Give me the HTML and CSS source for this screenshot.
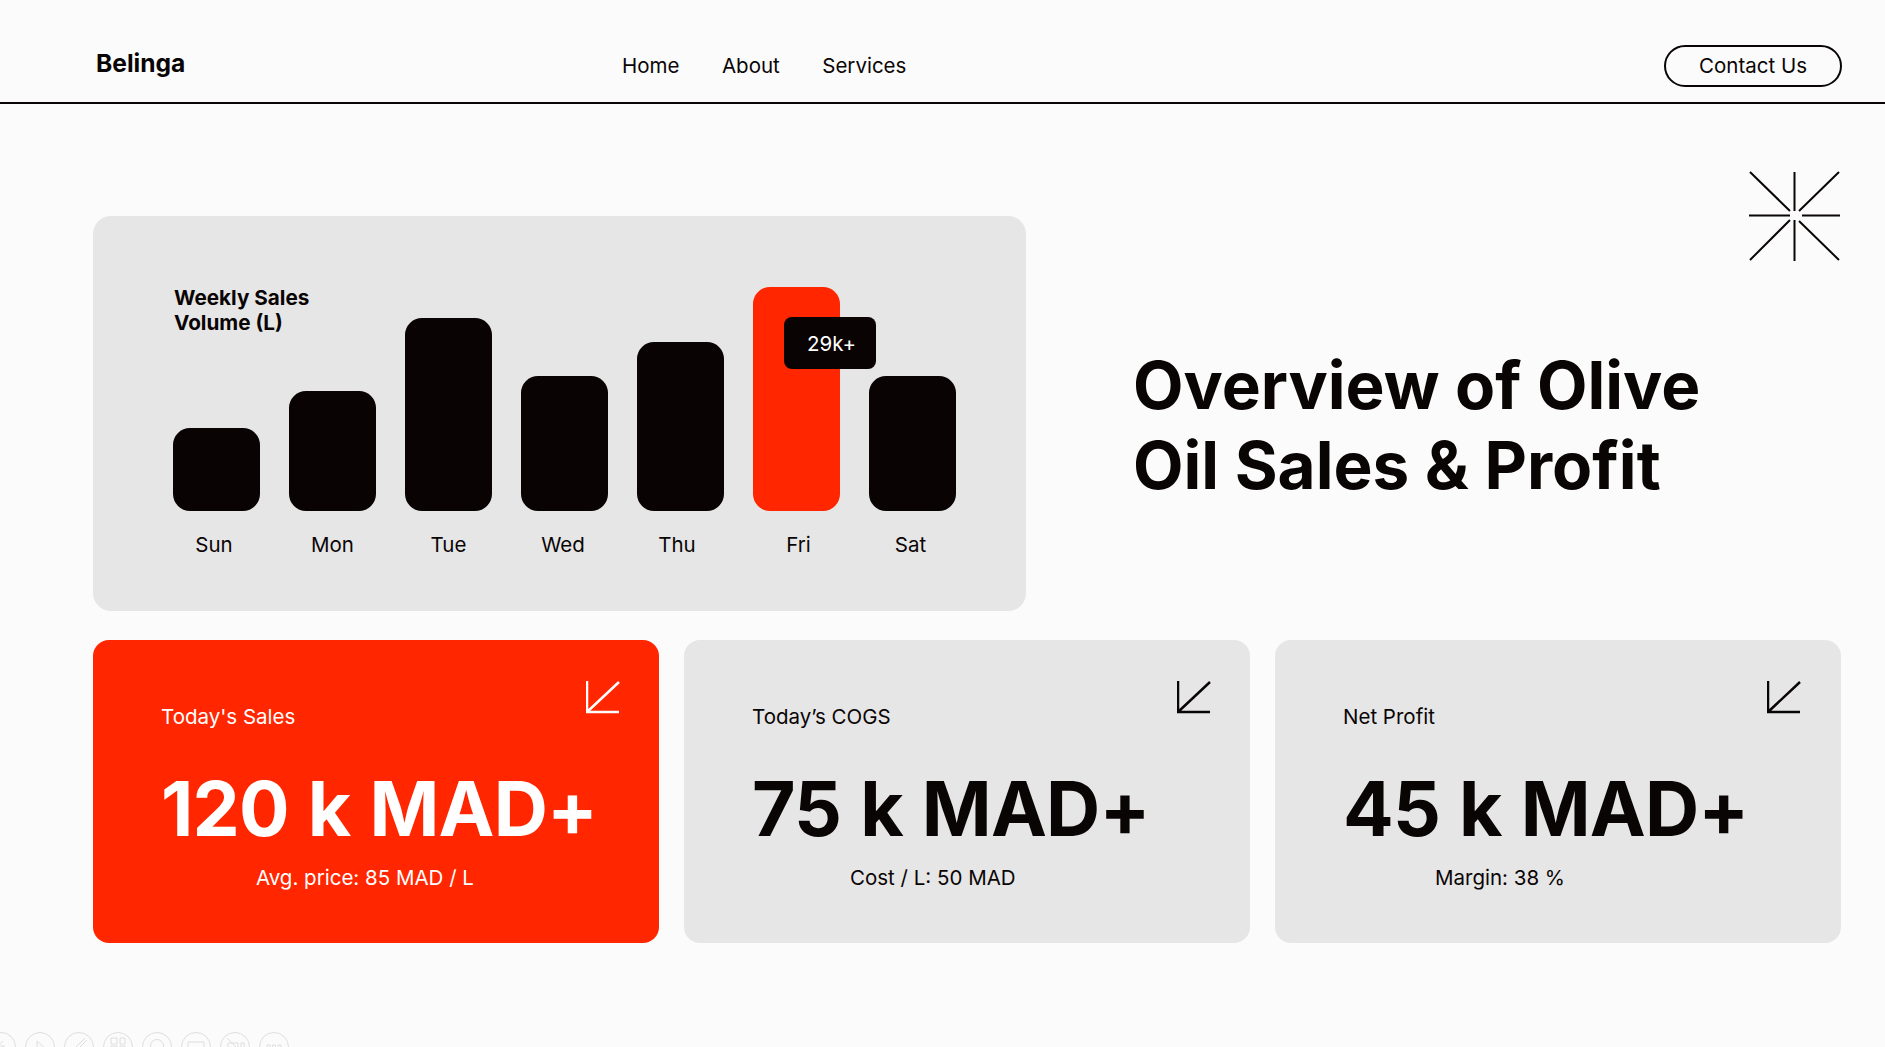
FILE: index.html
```html
<!DOCTYPE html>
<html lang="en">
<head>
    <meta charset="UTF-8">
    <meta name="viewport" content="width=device-width, initial-scale=1.0">
    <title>Belinga - Olive Oil Sales</title>
    <link rel="stylesheet" href="styles.css">
</head>
<body>
    <header class="site-header">
        <div class="logo">Belinga</div>
        <nav class="nav">
            <a href="#">Home</a>
            <a href="#">About</a>
            <a href="#">Services</a>
        </nav>
        <a class="contact-btn" href="#">Contact Us</a>
    </header>

    <main class="content">
        <section class="hero">
            <div class="chart-card">
                <h2 class="chart-title">Weekly Sales<br>Volume (L)</h2>
                <div class="bars">
                    <div class="bar" style="height:83px"></div>
                    <div class="bar" style="height:120px"></div>
                    <div class="bar" style="height:193px"></div>
                    <div class="bar" style="height:135px"></div>
                    <div class="bar" style="height:169px"></div>
                    <div class="bar bar-active" style="height:224px">
                        <div class="tooltip">29k+</div>
                    </div>
                    <div class="bar" style="height:135px"></div>
                </div>
                <div class="days">
                    <span>Sun</span>
                    <span>Mon</span>
                    <span>Tue</span>
                    <span>Wed</span>
                    <span>Thu</span>
                    <span>Fri</span>
                    <span>Sat</span>
                </div>
            </div>
            <div class="hero-side">
                <svg class="star" width="91" height="90" viewBox="0 0 91 90" fill="none" stroke="#0a0505" stroke-width="2">
                    <path d="M0 44.5H41M53 44.5H91M45.5 1V40M45.5 49V90M1 1L41 40M90 1L50 40M41 49L1 89M50 50L90 89"/>
                </svg>
                <h1 class="hero-title">Overview of Olive<br>Oil Sales &amp; Profit</h1>
            </div>
        </section>

        <section class="stats">
            <div class="stat stat-red">
                <div class="stat-head">
                    <span class="stat-label">Today's Sales</span>
                    <svg class="arrow" width="34" height="33" viewBox="0 0 34 33" fill="none" stroke="currentColor" stroke-width="2.5"><path d="M1 0V31H33M1 31L33 1"/></svg>
                </div>
                <div class="stat-value">120 k MAD+</div>
                <div class="stat-note">Avg. price: 85 MAD / L</div>
            </div>
            <div class="stat">
                <div class="stat-head">
                    <span class="stat-label">Today’s COGS</span>
                    <svg class="arrow" width="34" height="33" viewBox="0 0 34 33" fill="none" stroke="currentColor" stroke-width="2.5"><path d="M1 0V31H33M1 31L33 1"/></svg>
                </div>
                <div class="stat-value">75 k MAD+</div>
                <div class="stat-note">Cost / L: 50 MAD</div>
            </div>
            <div class="stat">
                <div class="stat-head">
                    <span class="stat-label">Net Profit</span>
                    <svg class="arrow" width="34" height="33" viewBox="0 0 34 33" fill="none" stroke="currentColor" stroke-width="2.5"><path d="M1 0V31H33M1 31L33 1"/></svg>
                </div>
                <div class="stat-value">45 k MAD+</div>
                <div class="stat-note">Margin: 38 %</div>
            </div>
        </section>
    </main>

    <!-- player controls, cut off by the bottom of the window -->
    <div class="player">
        <svg class="player-btn" viewBox="0 0 30 30"><circle cx="15" cy="15" r="14.5"/><path d="M17 9L12 14H19"/></svg>
        <svg class="player-btn" viewBox="0 0 30 30"><circle cx="15" cy="15" r="14.5"/><path d="M12 9L21 17H12Z"/></svg>
        <svg class="player-btn" viewBox="0 0 30 30"><circle cx="15" cy="15" r="14.5"/><path d="M21 6L10 17L8 22M23 8L12 19"/></svg>
        <svg class="player-btn" viewBox="0 0 30 30"><circle cx="15" cy="15" r="14.5"/><path d="M8 6H14V12H8ZM17 6H22V12H17ZM8 14H14V20H8ZM17 14H22V20H17Z"/></svg>
        <svg class="player-btn" viewBox="0 0 30 30"><circle cx="15" cy="15" r="14.5"/><circle cx="15" cy="14" r="6.5"/></svg>
        <svg class="player-btn" viewBox="0 0 30 30"><circle cx="15" cy="15" r="14.5"/><path d="M7 10H23V22H7Z"/></svg>
        <svg class="player-btn" viewBox="0 0 30 30"><circle cx="15" cy="15" r="14.5"/><path d="M7 6L23 22M8 11H18V22H8ZM21 11H24V22H21Z"/></svg>
        <svg class="player-btn" viewBox="0 0 30 30"><circle cx="15" cy="15" r="14.5"/><path d="M8 13H11V16H8ZM13.500 13H16.500V16H13.500ZM19 13H22V16H19Z"/></svg>
    </div>
</body>
</html>
```

FILE: styles.css
```css
html, body {
    height: 100%;
    overflow: hidden;
}
body {
    font-family: Inter, "Liberation Sans", sans-serif;
    margin: 0;
    background-color: #fbfbfb;
    color: #0a0505;
    font-size: 20.5px;
    line-height: 24px;
}

/* header */
.site-header {
    display: flex;
    align-items: center;
    height: 42px;
    padding: 45px 43px 15px 96px;
    border-bottom: 2px solid #0a0505;
}
.logo {
    width: 526px;
    font-size: 24.6px;
    font-weight: 700;
    margin-bottom: 6px;
}
.nav {
    display: flex;
    gap: 42.5px;
}
.nav a {
    color: #0a0505;
    text-decoration: none;
}
.contact-btn {
    margin-left: auto;
    box-sizing: border-box;
    width: 178px;
    height: 42px;
    line-height: 38px;
    text-align: center;
    color: #0a0505;
    text-decoration: none;
    border: 2px solid #0a0505;
    border-radius: 21px;
}

.content {
    padding: 67px 44px 0 93px;
}

/* hero */
.hero {
    display: flex;
    align-items: flex-start;
}
.chart-card {
    position: relative;
    box-sizing: border-box;
    width: 933px;
    height: 395px;
    margin-top: 45px;
    padding: 71px 0 0 80px;
    background: #e6e6e6;
    border-radius: 18px;
}
.chart-title {
    position: absolute;
    left: 81px;
    top: 70px;
    margin: 0;
    font-size: 20.7px;
    line-height: 24.5px;
    font-weight: 700;
}
.bars, .days {
    display: grid;
    grid-template-columns: repeat(7, 87px);
    column-gap: 29px;
}
.bars {
    height: 224px;
    align-items: end;
}
.bar {
    position: relative;
    background: #0a0303;
    border-radius: 17px;
}
.bar-active {
    background: #ff2600;
}
.tooltip {
    position: absolute;
    left: 31px;
    top: 30px;
    box-sizing: border-box;
    width: 92px;
    height: 52px;
    padding-left: 3px;
    line-height: 54px;
    text-align: center;
    color: #fff;
    background: #0a0303;
    border-radius: 8px;
}
.days {
    margin-top: 22px;
    text-align: center;
}
/* the labels don't sit quite centred under their bars */
.days span:nth-child(1) { padding-right: 5px; }
.days span:nth-child(4) { padding-right: 3px; }
.days span:nth-child(5) { padding-right: 7px; }
.days span:nth-child(6) { padding-left: 4px; }
.days span:nth-child(7) { padding-right: 4px; }
.hero-side {
    flex: 1;
    display: flex;
    flex-direction: column;
    padding-left: 107px;
}
.star {
    align-self: flex-end;
    margin-right: 1px;
}
.hero-title {
    margin: 85px 0 0;
    font-size: 65.6px;
    line-height: 79.5px;
    font-weight: 700;
}

/* stat cards */
.stats {
    display: grid;
    grid-template-columns: repeat(3, 1fr);
    gap: 25px;
    margin-top: 29px;
}
.stat {
    box-sizing: border-box;
    height: 303px;
    padding: 41px 39px 0 68px;
    background: #e6e6e6;
    border-radius: 16px;
}
.stat-red {
    background: #ff2600;
    color: #fff;
}
.stat-head {
    display: flex;
    justify-content: space-between;
    align-items: flex-start;
}
.stat-label {
    margin-top: 24px;
}
.stat-value {
    margin-top: 35px;
    font-size: 75px;
    line-height: 90px;
    font-weight: 700;
    letter-spacing: -0.8px;
    word-spacing: 2px;
}
.stat-note {
    margin: 12px 0 0 95px;
}
.stat:nth-child(2) .stat-note { margin-left: 98px; }
.stat:nth-child(3) .stat-note { margin-left: 92px; }
.stat:nth-child(3) .arrow { margin-right: 1px; }

/* player */
.player {
    display: flex;
    gap: 9px;
    margin: 89px 0 0 -14px;
}
.player-btn {
    width: 30px;
    height: 30px;
    flex: none;
    fill: none;
    stroke: #dedede;
    stroke-width: 1;
}
```
